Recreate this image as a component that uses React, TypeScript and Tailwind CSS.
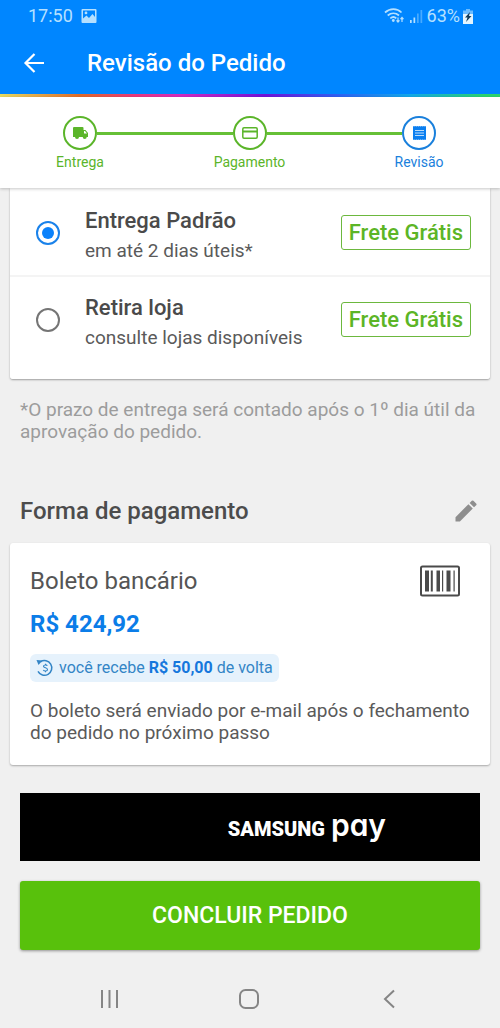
import React, { useState } from "react";

type StepProps = { label: string; active?: boolean; children: React.ReactNode };

function Step({ label, active, children }: StepProps) {
  return (
    <li
      className={`flex w-[34px] shrink-0 flex-col items-center ${active ? "text-[#1a80dc]" : "text-[#5bb52a]"}`}
      aria-current={active ? "step" : undefined}
    >
      <span className="flex size-[34px] items-center justify-center rounded-full border-2 border-current">
        {children}
      </span>
      <span className="mt-0.5 text-sm leading-5 whitespace-nowrap">{label}</span>
    </li>
  );
}

function Connector() {
  return <li aria-hidden="true" className="mt-4 h-[3px] flex-1 bg-[#66c036]" />;
}

type OptionProps = {
  id: string;
  title: string;
  detail: string;
  checked: boolean;
  onSelect: () => void;
};

function DeliveryOption({ id, title, detail, checked, onSelect }: OptionProps) {
  return (
    <div className="flex items-start pr-[19px] pl-[26px]">
      <input
        type="radio"
        id={id}
        name="delivery"
        checked={checked}
        onChange={onSelect}
        className="mt-[15px] size-6 shrink-0 appearance-none rounded-full border-2 border-[#757575] bg-white bg-clip-content p-1 checked:border-[#1a82ea] checked:bg-[#0b82fb]"
      />
      <label htmlFor={id} className="ml-[25px] flex-1">
        <span className="block text-[22px] leading-[30px] font-medium text-[#4a4a4a]">{title}</span>
        <span className="block text-[19px] leading-[30px] text-[#5a5a5a]">{detail}</span>
      </label>
      <span className="mt-[9px] rounded-[3px] border border-[#6cb83e] px-[7px] text-[22px] leading-[33px] font-medium whitespace-nowrap text-[#5cb526]">
        Frete Grátis
      </span>
    </div>
  );
}

export default function App() {
  const [delivery, setDelivery] = useState("padrao");

  return (
    <div className="flex min-h-screen flex-col bg-[#f0f0f0] font-[Roboto,sans-serif]">
      <header className="bg-[#0086ff] text-white">
        <div className="flex h-8 items-center justify-between pr-[27px] pl-7 text-lg leading-8 text-[#b5e0ff]">
          <div className="flex items-center gap-2">
            <span>17:50</span>
            <svg width="16" height="16" viewBox="0 0 16 16" aria-hidden="true">
              <path
                fill="currentColor"
                fillRule="evenodd"
                d="M1.500 1h13a1 1 0 0 1 1 1v12a1 1 0 0 1-1 1h-13a1 1 0 0 1-1-1V2a1 1 0 0 1 1-1Zm.5 1.500v8l3.500-3 2.500 2.500 3.500-4 2.500 3V2.500ZM5 3.500a1.400 1.400 0 1 1 0 2.800 1.400 1.400 0 0 1 0-2.800Z"
              />
            </svg>
          </div>
          <div className="flex items-center gap-[3px]">
            <svg width="40" height="18" viewBox="0 0 40 18" fill="none" stroke="currentColor" aria-hidden="true">
              <path strokeWidth="1.700" d="M1 5.500c5-4.500 12-4.500 16.500 0M3.700 8.500c3.500-3 8-3 11.300 0M6.300 11.300c2-1.600 4.300-1.600 6 0" />
              <circle cx="9.300" cy="13.500" r="1.400" fill="currentColor" stroke="none" />
              <path strokeWidth="1.200" d="M14 10.500v4.500M12.500 13.300l1.500 1.700 1.500-1.700M18 15v-4.500M16.500 12.200l1.500-1.700 1.500 1.700" />
              <path fill="currentColor" stroke="none" d="M26 13h1.700v3H26zM29.500 10.500h1.700V16h-1.700z" />
              <path fill="currentColor" stroke="none" opacity=".4" d="M33 6.500h1.700V16H33zM36.500 3h1.700v13h-1.700z" />
            </svg>
            <div className="flex items-center gap-[3px]">
              <span>63%</span>
              <svg width="10" height="16" viewBox="0 0 10 16" aria-hidden="true">
                <path fill="#6cbcff" d="M3 1h4v1.500h3V7H0V2.500h3z" />
                <path fill="#e4f5ff" d="M0 6h10v10H0z" />
                <path fill="#123c5c" d="M7 4 2 9.500h2.500L3 14l5.500-6H6z" />
              </svg>
            </div>
          </div>
        </div>
        <div className="flex h-[62px] items-center pl-[22px]">
          <button type="button" aria-label="Voltar" className="size-6">
            <svg width="24" height="24" viewBox="0 0 24 24" fill="none" stroke="currentColor" strokeWidth="2.200" aria-hidden="true">
              <path d="M22 12H4M12.500 3 3.500 12l9 9" />
            </svg>
          </button>
          <h1 className="ml-[41px] text-2xl leading-8 font-medium">Revisão do Pedido</h1>
        </div>
        <div className="h-[3px] bg-[linear-gradient(90deg,#e8dc62_0%,#df6a28_16%,#e8387c_27%,#d22ac0_36%,#7012d8_53%,#2d62f2_68%,#12a8e8_82%,#2bd36e_97%)]" />
      </header>

      <nav aria-label="Etapas do pedido" className="z-10 bg-white pt-[19px] pb-4 shadow-[0_1px_3px_rgba(0,0,0,0.22)]">
        <ol className="flex items-start pr-16 pl-[63px]">
          <Step label="Entrega">
            <svg width="17" height="14" viewBox="0 0 17 14" aria-hidden="true">
              <path
                fill="currentColor"
                fillRule="evenodd"
                d="M2 1h8.500a1 1 0 0 1 1 1v2h2l2.500 3v4h-1.300a2 2 0 0 1-4 0H7a2 2 0 0 1-4 0H1V2a1 1 0 0 1 1-1Zm10 4v2.500h3L13 5Z"
              />
            </svg>
          </Step>
          <Connector />
          <Step label="Pagamento">
            <svg width="16" height="12" viewBox="0 0 16 12" fill="none" stroke="currentColor" aria-hidden="true">
              <rect x=".8" y=".8" width="14.400" height="10.400" rx="1.200" strokeWidth="1.500" />
              <path strokeWidth="2" d="M1 4.500h14" />
            </svg>
          </Step>
          <Connector />
          <Step label="Revisão" active>
            <svg width="13" height="14" viewBox="0 0 13 14" aria-hidden="true">
              <path fill="#0b7ff0" d="M0 0l1 .6L2.200 0l1.100.6L4.300 0l1.100.6L6.500 0l1.100.6L8.700 0l1.100.6L10.800 0l1.200.6L13 0v14l-1-.6-1.200.6-1-.6-1.100.6-1.100-.6-1.100.6-1.100-.6-1.100.6-1-.6-1.100.6-1.200-.6L0 14z" />
              <path stroke="#b9dcfb" strokeWidth="1.100" d="M2 4.500h9M2 7h9M2 9.500h9" />
            </svg>
          </Step>
        </ol>
      </nav>

      <main className="flex flex-col">
        <fieldset
          aria-label="Forma de entrega"
          className="mx-2.5 rounded-b-[3px] bg-white pt-[18px] pb-[26px] shadow-[0_1px_2px_rgba(0,0,0,0.35)]"
        >
          <DeliveryOption
            id="padrao"
            title="Entrega Padrão"
            detail="em até 2 dias úteis*"
            checked={delivery === "padrao"}
            onSelect={() => setDelivery("padrao")}
          />
          <div className="mt-[9px] mb-4 h-0.5 bg-[#f4f4f4]" />
          <DeliveryOption
            id="retira"
            title="Retira loja"
            detail="consulte lojas disponíveis"
            checked={delivery === "retira"}
            onSelect={() => setDelivery("retira")}
          />
        </fieldset>

        <p className="mt-5 px-5 text-[19px] leading-[22px] text-[#9c9c9c]">
          *O prazo de entrega será contado após o 1º dia útil da aprovação do pedido.
        </p>

        <div className="mt-[52px] flex items-center justify-between pr-5 pl-5">
          <h2 className="text-2xl leading-8 font-medium text-[#4c4c4c]">Forma de pagamento</h2>
          <button type="button" aria-label="Editar forma de pagamento" className="text-[#8e8e8e]">
            <svg width="28" height="28" viewBox="0 0 24 24" fill="currentColor" aria-hidden="true">
              <path d="M3 17.250V21h3.750L17.810 9.940l-3.750-3.750L3 17.250zM20.710 7.040a1 1 0 0 0 0-1.410l-2.340-2.340a1 1 0 0 0-1.410 0l-1.830 1.830 3.750 3.750 1.830-1.830z" />
            </svg>
          </button>
        </div>

        <section className="mx-2.5 mt-4 rounded-[3px] bg-white px-5 pt-[22px] pb-[21px] shadow-[0_1px_2px_rgba(0,0,0,0.3)]">
          <div className="flex items-center justify-between pr-2.5">
            <h3 className="text-2xl leading-8 text-[#555]">Boleto bancário</h3>
            <svg width="40" height="32" viewBox="0 0 40 32" aria-hidden="true">
              <rect x="1" y="1.500" width="38" height="29" rx="1.500" fill="none" stroke="#4a4a4a" strokeWidth="2" />
              <path
                fill="#4a4a4a"
                d="M5 5.500h4v21H5zM10.800 5.500h2v21h-2zM16.500 5.500h3.500v21h-3.500zM22 5.500h1.200v21H22zM26.500 5.500h4v21h-4zM33.500 5.500h1.200v21h-1.200z"
              />
            </svg>
          </div>
          <p className="mt-[11px] text-2xl leading-8 font-bold text-[#0b7de8]">R$ 424,92</p>
          <div className="mt-3.5 flex w-fit items-center gap-[5px] rounded-md bg-[#e6f2fc] px-1.5 text-base leading-7 text-[#3385c6]">
            <svg width="18" height="18" viewBox="0 0 18 18" fill="none" stroke="currentColor" strokeWidth="1.500" aria-hidden="true">
              <path d="M4.500 2.800A7.300 7.300 0 1 1 2 12.300" />
              <path fill="currentColor" stroke="none" d="M.5 1 6.500 1.500 2.500 6z" />
              <path strokeWidth="1.100" d="M11.300 6.800C10.500 5.400 7.300 5.700 7.500 7.400c.2 1.700 4 1.200 4 3.100 0 1.800-3.300 2-4.200.4M9.500 4.700v1.200M9.500 11.800v1.400" />
            </svg>
            <span>
              você recebe <strong className="font-bold text-[#1577dc]">R$ 50,00</strong> de volta
            </span>
          </div>
          <p className="mt-[18px] text-[19px] leading-[22px] text-[#5a5a5a]">
            O boleto será enviado por e-mail após o fechamento do pedido no próximo passo
          </p>
        </section>

        <div className="mt-7 flex flex-col gap-5 px-5">
          <button type="button" className="flex h-[68px] items-center justify-end bg-black pr-[94px] text-white">
            <span className="flex items-baseline gap-1.5">
              <span className="text-xl leading-8 font-black">SAMSUNG</span>
              <span className="font-[Inter,sans-serif] text-3xl leading-8 font-semibold [font-feature-settings:'cv11']">
                pay
              </span>
            </span>
          </button>
          <button
            type="button"
            className="h-[69px] rounded-[3px] bg-[#58c10c] text-[23px] leading-8 font-medium text-white shadow-[0_1px_3px_rgba(0,0,0,0.4)]"
          >
            CONCLUIR PEDIDO
          </button>
        </div>
      </main>

      <nav aria-label="Sistema" className="mt-auto flex h-[58px] items-center justify-between pr-[101px] pl-[99px] text-[#858585]">
        <button type="button" aria-label="Recentes">
          <svg width="20" height="20" viewBox="0 0 20 20" fill="none" stroke="currentColor" strokeWidth="2" aria-hidden="true">
            <path d="M3 1v18M10.500 1v18M18 1v18" />
          </svg>
        </button>
        <button type="button" aria-label="Início">
          <svg width="20" height="20" viewBox="0 0 20 20" fill="none" stroke="currentColor" strokeWidth="2" aria-hidden="true">
            <rect x="1" y="1" width="18" height="18" rx="5.500" />
          </svg>
        </button>
        <button type="button" aria-label="Voltar à tela anterior">
          <svg width="20" height="20" viewBox="0 0 20 20" fill="none" stroke="currentColor" strokeWidth="2" aria-hidden="true">
            <path d="M15 1.500 6 10l9 8.500" />
          </svg>
        </button>
      </nav>
    </div>
  );
}
